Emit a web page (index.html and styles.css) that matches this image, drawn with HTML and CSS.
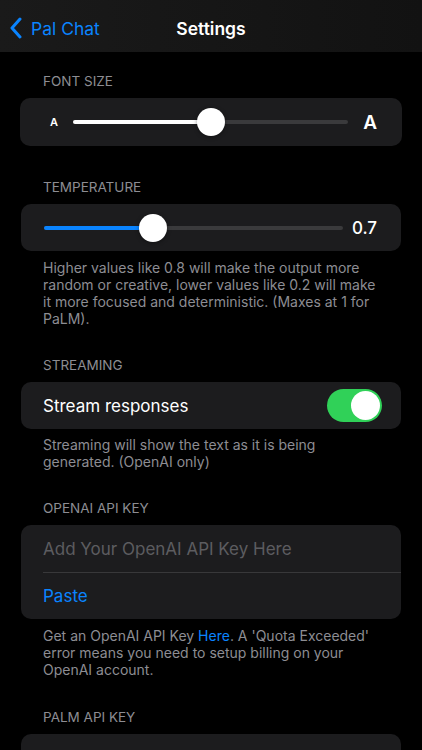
FILE: index.html
```html
<!DOCTYPE html>
<html lang="en">
<head>
    <meta charset="UTF-8">
    <meta name="viewport" content="width=device-width, initial-scale=1.0">
    <title>Settings</title>
    <link rel="stylesheet" href="styles.css">
</head>
<body>
    <div class="nav-bar">
        <div class="back">
            <svg class="chevron" width="13" height="22" viewBox="0 0 13 22">
                <path d="M11 2 L3 11 L11 20" fill="none" stroke="#0a84ff" stroke-width="3" stroke-linecap="round" stroke-linejoin="round"/>
            </svg>
            <span>Pal Chat</span>
        </div>
        <div class="nav-title">Settings</div>
    </div>

    <div class="content">
        <!-- font size -->
        <div class="group first">
            <div class="group-header">Font Size</div>
            <div class="card slider-row font-row">
                <span class="a-small">A</span>
                <div class="track">
                    <div class="fill white" style="width: 50%;"></div>
                    <div class="thumb" style="left: 50%;"></div>
                </div>
                <span class="a-large">A</span>
            </div>
        </div>

        <!-- temperature -->
        <div class="group after-card">
            <div class="group-header">Temperature</div>
            <div class="card slider-row temp-row">
                <div class="track">
                    <div class="fill blue" style="width: 36.4%;"></div>
                    <div class="thumb" style="left: 36.4%;"></div>
                </div>
                <span class="value">0.7</span>
            </div>
            <div class="group-footer">Higher values like 0.8 will make the output more random or creative, lower values like 0.2 will make it more focused and deterministic. (Maxes at 1 for PaLM).</div>
        </div>

        <!-- streaming -->
        <div class="group">
            <div class="group-header">Streaming</div>
            <div class="card toggle-row">
                <span>Stream responses</span>
                <div class="toggle on"><div class="knob"></div></div>
            </div>
            <div class="group-footer">Streaming will show the text as it is being generated. (OpenAI only)</div>
        </div>

        <!-- openai key -->
        <div class="group">
            <div class="group-header">OpenAI API Key</div>
            <div class="card">
                <div class="cell placeholder">Add Your OpenAI API Key Here</div>
                <div class="cell link">Paste</div>
            </div>
            <div class="group-footer">Get an OpenAI API Key <span class="blue-text">Here</span>. A 'Quota Exceeded' error means you need to setup billing on your OpenAI account.</div>
        </div>

        <!-- palm key -->
        <div class="group last">
            <div class="group-header">PaLM API Key</div>
            <div class="card">
                <div class="cell placeholder">Add Your PaLM API Key Here</div>
                <div class="cell link">Paste</div>
            </div>
        </div>
    </div>
</body>
</html>
```

FILE: styles.css
```css
body {
    margin: 0;
    background-color: #000;
    color: #fff;
    font-family: Inter, "Noto Sans", sans-serif;
    height: 750px;
    overflow: hidden;
}
.nav-bar {
    height: 52px;
    box-sizing: border-box;
    padding-top: 5px;
    background: linear-gradient(90deg, #1a1a1a, #121212);
    display: flex;
    align-items: center;
    justify-content: center;
    position: relative;
}
.back {
    position: absolute;
    left: 9px;
    top: 17px;
    display: flex;
    align-items: center;
    gap: 9px;
    color: #0a84ff;
    font-size: 17.5px;
}
.nav-title {
    font-size: 17.5px;
    font-weight: 600;
}
.content {
    padding: 0 21px;
}
.group {
    margin-top: 30px;
}
.group.first {
    margin-top: 21px;
}
.group.after-card {
    margin-top: 33px;
}
.group.last {
    margin-top: 31px;
}
.group-header {
    font-size: 13.5px;
    line-height: 16px;
    text-transform: uppercase;
    color: #8d8d93;
    padding-left: 22px;
    margin-bottom: 9px;
}
.card {
    background-color: #1c1c1e;
    border-radius: 10px;
}
.slider-row {
    height: 47px;
    display: flex;
    align-items: center;
}
.font-row {
    height: 48px;
    margin: 0 -1px;
    padding: 0 25px 0 30px;
}
.temp-row {
    padding: 0 22px 0 23px;
}
.track {
    flex: 1;
    height: 4px;
    border-radius: 2px;
    background-color: #3a3a3c;
    position: relative;
}
.fill {
    height: 100%;
    border-radius: 2px;
}
.fill.white {
    background-color: #fff;
}
.fill.blue {
    background-color: #0a84ff;
}
.thumb {
    position: absolute;
    top: 50%;
    width: 28px;
    height: 28px;
    margin: -14px 0 0 -14px;
    border-radius: 50%;
    background-color: #fff;
    box-shadow: 0 1px 4px rgba(0, 0, 0, 0.4);
}
.a-small {
    font-size: 11px;
    font-weight: 600;
    margin-right: 15px;
}
.a-large {
    font-size: 19px;
    font-weight: 600;
    margin-left: 15px;
}
.value {
    font-size: 17px;
    font-weight: 500;
    margin-left: 9px;
    margin-right: 2px;
}
.group-footer {
    font-size: 14px;
    line-height: 17px;
    color: #8d8d93;
    padding: 0 22px;
    margin-top: 8px;
}
.blue-text {
    color: #0a84ff;
}
.toggle-row {
    height: 47px;
    display: flex;
    align-items: center;
    justify-content: space-between;
    padding: 0 19px 0 22px;
    font-size: 17px;
}
.toggle-row + .group-footer {
    margin-top: 7px;
}
.toggle {
    width: 55px;
    height: 33px;
    border-radius: 17px;
    background-color: #30d158;
    position: relative;
}
.toggle .knob {
    position: absolute;
    top: 2px;
    right: 2px;
    width: 29px;
    height: 29px;
    border-radius: 50%;
    background-color: #fff;
}
.cell {
    height: 47px;
    display: flex;
    align-items: center;
    padding-left: 22px;
    font-size: 17px;
}
.cell + .cell {
    height: 46px;
    border-top: 1px solid #38383a;
    margin-left: 22px;
    padding-left: 0;
}
.placeholder {
    color: #5c5c60;
}
.link {
    color: #0a84ff;
}
```
